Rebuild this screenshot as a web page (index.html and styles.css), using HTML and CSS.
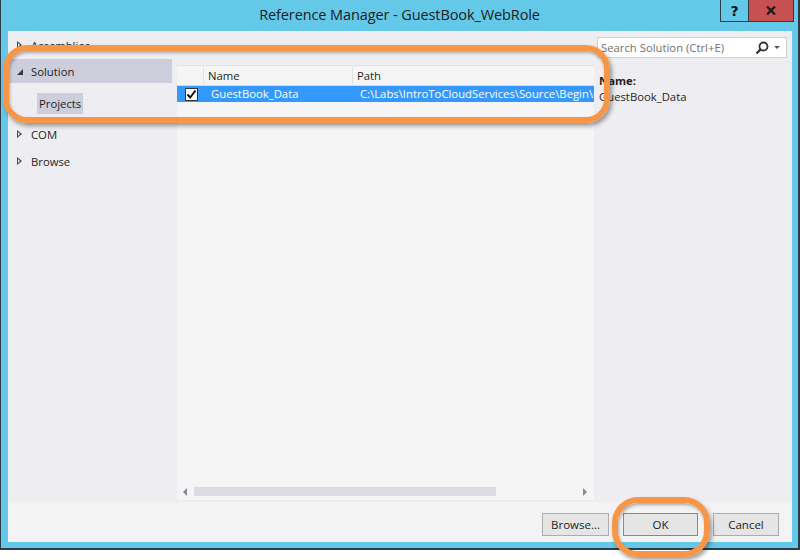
FILE: index.html
```html
<!DOCTYPE html>
<html>
<head>
<meta charset="utf-8">
<link rel="stylesheet" href="styles.css">
</head>
<body>
<div class="screen">
  <div class="window">
    <div class="titlebar">
      <div class="title">Reference Manager - GuestBook_WebRole</div>
      <div class="caption-btns">
        <div class="cbtn help">?</div>
        <div class="cbtn close">
          <svg width="10" height="9" viewBox="0 0 10 9"><path d="M1 0.5 L9 8.5 M9 0.5 L1 8.5" stroke="#1a1a1a" stroke-width="2.2" fill="none"/></svg>
        </div>
      </div>
    </div>
    <div class="client">
      <div class="main">
        <nav class="nav">
          <div class="nav-row"><span class="tri-open"></span><span>Assemblies</span></div>
          <div class="nav-row selected"><span class="tri-down"></span><span>Solution</span></div>
          <div class="nav-sub"><span class="sub-sel">Projects</span></div>
          <div class="nav-row"><span class="tri-open"></span><span>COM</span></div>
          <div class="nav-row"><span class="tri-open"></span><span>Browse</span></div>
        </nav>
        <div class="list">
          <div class="list-head">
            <div class="col-check"></div>
            <div class="col-name">Name</div>
            <div class="col-path">Path</div>
          </div>
          <div class="list-row sel">
            <div class="col-check"><span class="checkbox">
              <svg width="11" height="11" viewBox="0 0 11 11"><path d="M1.5 5.5 L4.2 8.5 L9.5 1.5" stroke="#111" stroke-width="2" fill="none"/></svg>
            </span></div>
            <div class="col-name">GuestBook_Data</div>
            <div class="col-path">C:\Labs\IntroToCloudServices\Source\Begin\GuestBook\GuestBook_Data\GuestBook_Data.csproj</div>
          </div>
          <div class="list-fill"></div>
          <div class="hscroll">
            <span class="arr-left"></span>
            <span class="thumb"></span>
            <span class="arr-right"></span>
          </div>
        </div>
        <div class="details">
          <div class="search">
            <span class="search-text">Search Solution (Ctrl+E)</span>
            <svg class="search-icon" width="14" height="14" viewBox="0 0 14 14"><circle cx="8.5" cy="5.5" r="4" stroke="#333" stroke-width="1.8" fill="none"/><path d="M5.6 8.4 L1.5 12.5" stroke="#333" stroke-width="2.2"/></svg>
            <span class="search-drop"></span>
          </div>
          <div class="d-label">Name:</div>
          <div class="d-value">GuestBook_Data</div>
        </div>
      </div>
      <div class="footer">
        <button class="btn browse">Browse...</button>
        <button class="btn ok">OK</button>
        <button class="btn cancel">Cancel</button>
      </div>
    </div>
  </div>
  <div class="ann ann-solution"></div>
  <div class="ann ann-ok"></div>
</div>
</body>
</html>
```
FILE: styles.css
```css
* { box-sizing: border-box; }
html, body { margin: 0; padding: 0; background: #ffffff; }
body { font-family: "Open Sans", "Liberation Sans", sans-serif; font-size: 11.3px; color: #1e1e1e; }

.screen { position: relative; width: 800px; height: 560px; overflow: hidden; background: #fff; }

.window {
  width: 800px; height: 550px;
  background: #64c9e9;
  border-left: 1px solid #2c3b46;
  border-right: 2px solid #2c3b46;
  border-bottom: 2px solid #2c3b46;
  display: flex; flex-direction: column;
}

.titlebar { height: 31px; flex: none; position: relative; display: flex; justify-content: center; }
.title { font-size: 14.5px; line-height: 30px; color: #1b1b1b; letter-spacing: -0.1px; }
.caption-btns { position: absolute; right: 4px; top: 0; display: flex; }
.cbtn { height: 22px; border: 1px solid #2c3b46; border-top: none; display: flex; align-items: center; justify-content: center; }
.help { width: 28px; font-weight: bold; font-size: 14px; font-family: "DejaVu Sans", sans-serif; color: #111; border-right: none; }
.close { width: 46px; background: #c75050; }

.client { flex: 1; margin: 0 6px 6px 7px; background: #eeeef2; display: flex; flex-direction: column; }
.main { flex: 1; display: flex; }

.nav { width: 164px; padding-top: 2px; }
.nav-row { height: 24px; display: flex; align-items: center; padding-left: 9px; gap: 8px; margin-bottom: 3px; }
.nav-row.selected { background: #cccedb; margin-top: -1px; margin-bottom: 0; }
.tri-open { width: 6px; height: 9px; position: relative; }
.tri-open::before { content: ""; position: absolute; left: 0; top: 0; border-left: 5px solid #4a4a4a; border-top: 4.5px solid transparent; border-bottom: 4.5px solid transparent; }
.tri-open::after { content: ""; position: absolute; left: 1px; top: 2px; border-left: 2.5px solid #eeeef2; border-top: 2.5px solid transparent; border-bottom: 2.5px solid transparent; }
.tri-down { width: 6px; height: 6px; border-right: 6px solid #3a3a3a; border-top: 6px solid transparent; margin-top: 1px; }
.nav-sub { height: 39px; padding: 10px 0 0 29px; }
.sub-sel { display: inline-block; background: #cccedb; padding: 0 2px; line-height: 21px; height: 21px; }

.list { width: 417px; margin: 34px 0 2px 5px; background: #f5f5f5; display: flex; flex-direction: column; }
.list-head { display: flex; height: 21px; border-top: 1px solid #e3e3e6; border-bottom: 1px solid #dcdce0; }
.list-head > div { line-height: 19px; border-right: 1px solid #e2e2e6; }
.col-check { width: 27px; flex: none; display: flex; align-items: center; justify-content: center; }
.col-name { width: 149px; flex: none; padding-left: 4px; white-space: nowrap; }
.col-path { flex: 1; padding-left: 4px; white-space: nowrap; overflow: hidden; }
.list-head .col-path { border-right: none; }
.list-row { display: flex; height: 16px; line-height: 16px; }
.list-row.sel { background: #3399ff; color: #fff; }
.list-row .col-name { padding-left: 7px; }
.list-row .col-path { padding-left: 7px; }
.checkbox { width: 13px; height: 13px; background: #fff; border: 1px solid #333; display: flex; align-items: center; justify-content: center; margin-left: 1px; }
.list-fill { flex: 1; }
.hscroll { height: 13px; display: flex; align-items: center; padding: 0 7px 0 6px; margin-bottom: 2px; }
.arr-left { width: 0; height: 0; border-right: 4px solid #868999; border-top: 4px solid transparent; border-bottom: 4px solid transparent; }
.thumb { width: 302px; height: 9px; background: #dcdce4; margin-left: 7px; }
.arr-right { width: 0; height: 0; border-left: 4px solid #868999; border-top: 4px solid transparent; border-bottom: 4px solid transparent; margin-left: auto; }

.details { width: 190px; margin-left: 3px; padding-top: 6px; }
.search { height: 21px; background: #fff; border: 1px solid #cccedb; display: flex; align-items: center; padding: 0 0 0 3px; }
.search-text { color: #717171; flex: 1; white-space: nowrap; }
.search-icon { margin-right: 5px; }
.search-drop { width: 0; height: 0; border-top: 3px solid #555; border-left: 3px solid transparent; border-right: 3px solid transparent; margin-right: 6px; }
.d-label { font-weight: bold; margin: 15px 0 0 2px; line-height: 16px; }
.d-value { margin-left: 2px; line-height: 15px; }

.footer { height: 40px; flex: none; background: #f3f3f4; display: flex; justify-content: flex-end; align-items: flex-start; padding: 11px 13px 0 0; gap: 14px; }
.btn { height: 23px; background: #e5e5e5; border: 1px solid #acacac; font-family: inherit; font-size: 11.5px; color: #1e1e1e; padding: 0; margin: 0; }
.browse { width: 67px; }
.ok { width: 75px; border-color: #3f9be8; }
.cancel { width: 66px; margin-left: 1px; }

.ann { position: absolute; border: 6px solid #f79646; box-shadow: 2px 3px 4px rgba(40,40,40,0.45), inset 1px 2px 3px rgba(40,40,40,0.35); }
.ann-solution { left: 3px; top: 45px; width: 607px; height: 78px; border-radius: 24px; }
.ann-ok { left: 612px; top: 497px; width: 98px; height: 60px; border-radius: 26px; }
```
